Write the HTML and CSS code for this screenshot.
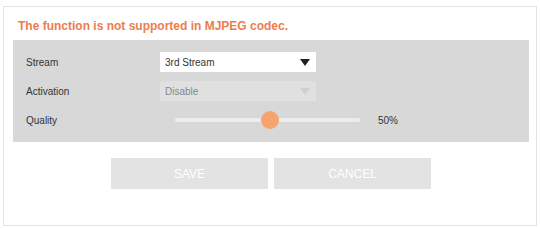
FILE: index.html
```html
<!DOCTYPE html>
<html>
<head>
<meta charset="utf-8">
<link rel="stylesheet" href="styles.css">
</head>
<body>
<div class="frame">
  <p class="notice">The function is not supported in MJPEG codec.</p>
  <div class="panel">
    <div class="row">
      <span class="label">Stream</span>
      <div class="select">
        <span>3rd Stream</span>
        <svg class="arrow" width="10" height="7" viewBox="0 0 10 7"><path d="M0 0H10L5 7Z" fill="#222"/></svg>
      </div>
    </div>
    <div class="row">
      <span class="label">Activation</span>
      <div class="select disabled">
        <span>Disable</span>
        <svg class="arrow" width="10" height="7" viewBox="0 0 10 7"><path d="M0 0H10L5 7Z" fill="#cfcfcf"/></svg>
      </div>
    </div>
    <div class="row">
      <span class="label">Quality</span>
      <div class="slider">
        <div class="track"></div>
        <div class="thumb"></div>
      </div>
      <span class="value">50%</span>
    </div>
  </div>
  <div class="buttons">
    <button class="btn">SAVE</button>
    <button class="btn">CANCEL</button>
  </div>
</div>
</body>
</html>
```
FILE: styles.css
```css
html, body {
  margin: 0;
  padding: 0;
  background: #ffffff;
  font-family: "Liberation Sans", Arial, sans-serif;
}
body {
  padding: 6px 3px 1px 3px;
}
.frame {
  border: 1px solid #e2e2e2;
  height: 220px;
  box-sizing: border-box;
  padding: 0 7px 0 9px;
}
.notice {
  margin: 0;
  padding: 12px 0 0 5px;
  height: 30px;
  box-sizing: border-box;
  color: #ec7d4e;
  font-size: 12px;
  font-weight: bold;
  line-height: 14px;
}
.panel {
  background: #d8d8d8;
  margin-top: 3px;
  height: 102px;
  box-sizing: border-box;
  padding: 12px 0 0 13px;
  display: flex;
  flex-direction: column;
  gap: 9px;
}
.row {
  display: flex;
  align-items: center;
  height: 20px;
}
.label {
  width: 134px;
  font-size: 10px;
  color: #333;
}
.select {
  width: 156px;
  height: 20px;
  box-sizing: border-box;
  background: #ffffff;
  display: flex;
  align-items: center;
  justify-content: space-between;
  padding: 0 6px 0 5px;
  font-size: 10px;
  color: #333;
}
.select.disabled {
  background: #e0e0e0;
  color: #888;
}
.slider {
  position: relative;
  width: 185px;
  height: 20px;
  margin-left: 15px;
  display: flex;
  align-items: center;
}
.track {
  width: 100%;
  height: 4px;
  background: #ececec;
  border-radius: 2px;
}
.thumb {
  position: absolute;
  left: 86px;
  top: 1px;
  width: 18px;
  height: 18px;
  border-radius: 50%;
  background: #f6a36f;
}
.value {
  margin-left: 18px;
  font-size: 10px;
  color: #333;
}
.buttons {
  display: flex;
  justify-content: flex-start;
  gap: 6px;
  margin-top: 16px;
  padding-left: 98px;
}
.btn {
  width: 157px;
  height: 31px;
  border: none;
  background: #e3e3e3;
  color: #ffffff;
  font-family: "Liberation Sans", Arial, sans-serif;
  font-size: 12px;
  padding: 0;
}
```
